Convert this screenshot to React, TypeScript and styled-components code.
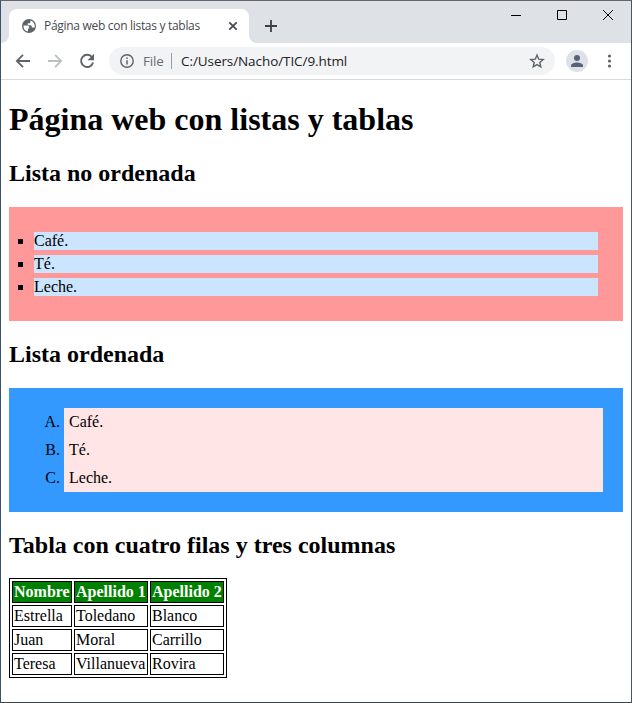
import React from "react";
import styled, { createGlobalStyle } from "styled-components";

const GlobalStyle = createGlobalStyle`
  * { box-sizing: border-box; }
  html, body { margin: 0; padding: 0; background: #fff; overflow: hidden; }
`;

const serif = `"Liberation Serif", "Times New Roman", serif`;
const sans = `"Open Sans", "Segoe UI", sans-serif`;

const Window = styled.div`
  width: 632px;
  height: 703px;
  border: 1px solid #4a565f;
  border-top-color: #65666b;
  border-left-color: #38546d;
  border-bottom-color: #3c4448;
  background: #fff;
  display: flex;
  flex-direction: column;
`;

const TabStrip = styled.header`
  height: 42px;
  background: #dee1e6;
  display: flex;
  align-items: flex-end;
`;

const TabFoot = styled.svg`
  display: block;
  width: 8px;
  height: 8px;
  flex: none;
`;

const Tab = styled.div`
  width: 240px;
  height: 34px;
  flex: none;
  background: #fff;
  border-radius: 8px 8px 0 0;
  display: flex;
  align-items: center;
  padding: 0 11px 0 13px;
`;

const TabTitle = styled.span`
  flex: 1;
  margin-left: 8px;
  font: 12px/18px ${sans};
  letter-spacing: -0.3px;
  color: #45494e;
  white-space: nowrap;
`;

const Icon = styled.svg`
  display: block;
  flex: none;
  overflow: visible;
`;

const NewTab = styled.div`
  height: 34px;
  padding-left: 8px;
  display: flex;
  align-items: center;
`;

const WindowControls = styled.div`
  align-self: flex-start;
  margin-left: auto;
  display: flex;
  gap: 36px;
  padding: 9px 18px 0 0;
`;

const Toolbar = styled.nav`
  height: 37px;
  flex: none;
  border-bottom: 1px solid #d8dadc;
  display: flex;
  align-items: center;
  padding: 0 0 0 14px;
`;

const NavButtons = styled.div`
  display: flex;
  gap: 16px;
  width: 94px;
`;

const AddressBar = styled.div`
  width: 446px;
  height: 28px;
  border-radius: 14px;
  background: #f1f3f4;
  display: flex;
  align-items: center;
  padding: 0 11px;
  font: 13.5px/20px ${sans};
  white-space: nowrap;
`;

const Scheme = styled.span`
  width: 28px;
  margin-left: 9px;
  letter-spacing: -0.2px;
  color: #696d72;
`;

const Divider = styled.i`
  width: 1px;
  height: 16px;
  background: #9a9da1;
`;

const Url = styled.span`
  flex: 1;
  margin-left: 9px;
  letter-spacing: -0.08px;
  color: #202124;
`;

const Avatar = styled.div`
  width: 22px;
  height: 22px;
  margin: 0 14px 0 11px;
  border-radius: 50%;
  background: #dee1e6;
  display: flex;
  align-items: center;
  justify-content: center;
`;

const Page = styled.main`
  padding: 21px 8px 0;
  font: 16px/18px ${serif};
  color: #000;
`;

const Title = styled.h1`
  margin: 0 0 22px;
  font-size: 32px;
  line-height: 37px;
`;

const Heading = styled.h2<{ $gap?: number }>`
  margin: 20px 0 ${(p) => p.$gap ?? 20}px;
  font-size: 24px;
  line-height: 27px;
`;

const BulletList = styled.ul`
  margin: 0;
  padding: 25px;
  list-style: square;
  background: #ff9999;
  display: grid;
  gap: 5px;

  li { background: #cce5ff; }
`;

const LetterList = styled.ol`
  margin: 0;
  padding: 20px 20px 20px 55px;
  list-style: upper-alpha;
  background: #3399ff;

  li { background: #ffe5e5; padding: 5px; }
`;

const Table = styled.table`
  border: 1px solid #000;
  border-spacing: 2px;
  border-collapse: separate;
  table-layout: fixed;
  width: 218px;

  th, td {
    border: 1px solid #000;
    padding: 1px;
    text-align: left;
    white-space: nowrap;
  }
  th { background: #008000; color: #fff; width: 74px; }
  th:first-child { width: 60px; }
`;

const items = ["Café.", "Té.", "Leche."];
const columns = ["Nombre", "Apellido 1", "Apellido 2"];
const people = [
  ["Estrella", "Toledano", "Blanco"],
  ["Juan", "Moral", "Carrillo"],
  ["Teresa", "Villanueva", "Rovira"],
];

export default function App() {
  return (
    <Window>
      <GlobalStyle />
      <TabStrip>
        <TabFoot viewBox="0 0 8 8"><path d="M8 0v8H0a8 8 0 0 0 8-8Z" fill="#fff" /></TabFoot>
        <Tab>
          <Icon width="14" height="14" viewBox="2 2 20 20">
            <circle cx="12" cy="12" r="10" fill="#5f6368" />
            <path fill="#fff" d="M14 4.2v2.2c0 1-.8 1.8-1.8 1.8h-2v2.6h3.6c1.2 0 2.2.9 2.2 2v1.4h2.4c.6 0 1 .4 1.2 1A8 8 0 0 0 14 4.2ZM4.2 11.2h5.1c1.8 0 3 1.2 3 3v1.3h-1.8v4.3A8 8 0 0 1 4.2 11.2Z" />
          </Icon>
          <TabTitle>Página web con listas y tablas</TabTitle>
          <Icon width="10" height="10" viewBox="0 0 10 10"><path d="m1.3 1.3 7.4 7.4m0-7.4L1.3 8.7" stroke="#45494e" strokeWidth="1.7" /></Icon>
        </Tab>
        <TabFoot viewBox="0 0 8 8"><path d="M0 0v8h8a8 8 0 0 1-8-8Z" fill="#fff" /></TabFoot>
        <NewTab>
          <Icon width="12" height="12" viewBox="0 0 12 12"><path d="M6 0v12M0 6h12" stroke="#3c4043" strokeWidth="1.8" /></Icon>
        </NewTab>
        <WindowControls>
          <Icon width="10" height="10" viewBox="0 0 10 10"><path d="M0 5.5h10" stroke="#000" /></Icon>
          <Icon width="10" height="10" viewBox="0 0 10 10"><path d="M.5.5h9v9h-9z" stroke="#000" fill="none" /></Icon>
          <Icon width="10" height="10" viewBox="0 0 10 10"><path d="m0 0 10 10M10 0 0 10" stroke="#000" /></Icon>
        </WindowControls>
      </TabStrip>
      <Toolbar>
        <NavButtons>
          <Icon width="16" height="16" viewBox="0 0 16 16"><path d="M15 8H2.5M8 1.8 1.8 8 8 14.2" fill="none" stroke="#5f6368" strokeWidth="1.8" /></Icon>
          <Icon width="16" height="16" viewBox="0 0 16 16"><path d="M1 8h12.5M8 1.8 14.2 8 8 14.2" fill="none" stroke="#bdc0c3" strokeWidth="1.8" /></Icon>
          <Icon width="16" height="16" viewBox="0 0 16 16">
            <path d="M13.1 4.2A6.1 6.1 0 1 0 14.1 9.6" fill="none" stroke="#5f6368" strokeWidth="1.9" />
            <path d="M15 .8v6.4H8.6Z" fill="#5f6368" />
          </Icon>
        </NavButtons>
        <AddressBar>
          <Icon width="14" height="14" viewBox="0 0 14 14">
            <circle cx="7" cy="7" r="6.2" fill="none" stroke="#5f6368" strokeWidth="1.4" />
            <path d="M7 6.2v4.2M7 3.5V5" stroke="#5f6368" strokeWidth="1.5" />
          </Icon>
          <Scheme>File</Scheme>
          <Divider />
          <Url>C:/Users/Nacho/TIC/9.html</Url>
          <Icon width="14" height="14" viewBox="0 0 14 14">
            <path d="m7 1.1 1.7 4.1 4.5.4-3.4 2.9 1 4.4L7 10.6l-3.8 2.3 1-4.4L.8 5.6l4.5-.4Z" fill="none" stroke="#5f6368" strokeWidth="1.4" />
          </Icon>
        </AddressBar>
        <Avatar>
          <Icon width="12" height="12" viewBox="0 0 12 12">
            <circle cx="6" cy="3" r="3" fill="#58637a" />
            <path d="M0 12v-1.5C0 8.5 3.5 7.5 6 7.5s6 1 6 3V12Z" fill="#58637a" />
          </Icon>
        </Avatar>
        <Icon width="14" height="14" viewBox="0 0 14 14" fill="#5f6368">
          <circle cx="7.5" cy="2" r="1.6" /><circle cx="7.5" cy="7" r="1.6" /><circle cx="7.5" cy="12" r="1.6" />
        </Icon>
      </Toolbar>
      <Page>
        <Title>Página web con listas y tablas</Title>
        <Heading>Lista no ordenada</Heading>
        <BulletList>{items.map((t) => <li key={t}>{t}</li>)}</BulletList>
        <Heading>Lista ordenada</Heading>
        <LetterList>{items.map((t) => <li key={t}>{t}</li>)}</LetterList>
        <Heading $gap={19}>Tabla con cuatro filas y tres columnas</Heading>
        <Table>
          <thead><tr>{columns.map((c) => <th key={c}>{c}</th>)}</tr></thead>
          <tbody>
            {people.map((row) => <tr key={row[0]}>{row.map((c) => <td key={c}>{c}</td>)}</tr>)}
          </tbody>
        </Table>
      </Page>
    </Window>
  );
}
